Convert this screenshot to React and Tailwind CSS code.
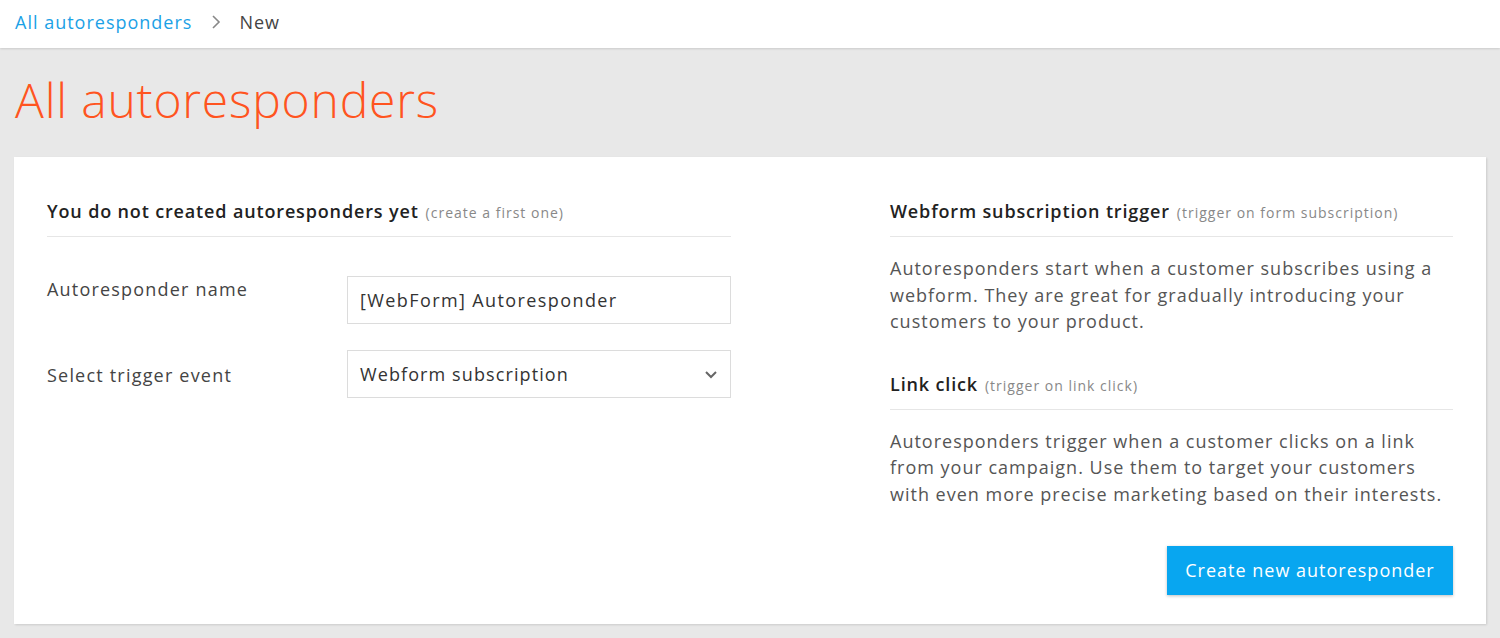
import React from "react";

const font = { fontFamily: '"Open Sans", "Liberation Sans", sans-serif' };

function SectionHead({ title, sub }) {
  return (
    <div className="flex items-baseline gap-[7px] pb-[11px] border-b border-[#e6e6e6]">
      <span className="text-[18px] font-semibold tracking-[0.85px] text-[#222]">{title}</span>
      <span className="text-[14px] tracking-[1px] text-[#888]">{sub}</span>
    </div>
  );
}

export default function App() {
  return (
    <div className="min-h-[638px] bg-[#e8e8e8] text-[#333]" style={font}>
      <div className="h-12 bg-white flex items-center pb-[4px] px-[15px] shadow-[0_1px_2px_rgba(0,0,0,0.12)]">
        <a className="text-[18px] tracking-[1px] text-[#1ba1e6]">All autoresponders</a>
        <svg className="ml-[19px] mr-[18px]" width="10" height="16" viewBox="0 0 10 16">
          <path d="M2 2 L8 8 L2 14" fill="none" stroke="#888" strokeWidth="1.6" />
        </svg>
        <span className="text-[18px] tracking-[1px] text-[#444]">New</span>
      </div>

      <h1 className="px-[15px] pt-[24px] pb-[30px] text-[48px] leading-[55px] font-light tracking-[0.8px] text-[#ff5420]">
        All autoresponders
      </h1>

      <div className="mx-[14px] bg-white shadow-[1px_1px_2px_rgba(0,0,0,0.12)] pt-[41px] pb-[29px] px-[33px]">
        <div className="flex justify-between">
          <div className="w-[684px]">
            <SectionHead title="You do not created autoresponders yet" sub="(create a first one)" />
            <div className="flex mt-[39px]">
              <label className="w-[300px] text-[18px] tracking-[1.2px] text-[#444]">Autoresponder name</label>
              <div className="flex-1 h-12 border border-[#dcdcdc] flex items-center px-[12px] text-[18px] tracking-[1.4px] text-[#333]">
                [WebForm] Autoresponder
              </div>
            </div>
            <div className="flex items-center mt-[26px]">
              <label className="w-[300px] pt-[2px] text-[18px] tracking-[1.2px] text-[#444]">Select trigger event</label>
              <div className="flex-1 h-12 border border-[#dcdcdc] flex items-center justify-between pl-[12px] pr-[12px] text-[18px] tracking-[1.1px] text-[#333]">
                <span>Webform subscription</span>
                <svg width="14" height="10" viewBox="0 0 14 10">
                  <path d="M2 3 L7 8 L12 3" fill="none" stroke="#666" strokeWidth="2" />
                </svg>
              </div>
            </div>
          </div>

          <div className="w-[563px]">
            <SectionHead title="Webform subscription trigger" sub="(trigger on form subscription)" />
            <p className="mt-[18px] text-[18px] leading-[26.5px] tracking-[1px] text-[#555]">
              Autoresponders start when a customer subscribes using a webform. They are great for gradually introducing your customers to your product.
            </p>
            <div className="mt-[36px]">
              <SectionHead title="Link click" sub="(trigger on link click)" />
            </div>
            <p className="mt-[18px] text-[18px] leading-[26.5px] tracking-[1px] text-[#555]">
              Autoresponders trigger when a customer clicks on a link from your campaign. Use them to target your customers with even more precise marketing based on their interests.
            </p>
            <div className="flex justify-end mt-[39px]">
              <button className="h-[49px] w-[286px] bg-[#08a6f0] text-white text-[18px] tracking-[1px] shadow-[0_1px_3px_rgba(0,0,0,0.25)]">
                Create new autoresponder
              </button>
            </div>
          </div>
        </div>
      </div>
    </div>
  );
}
